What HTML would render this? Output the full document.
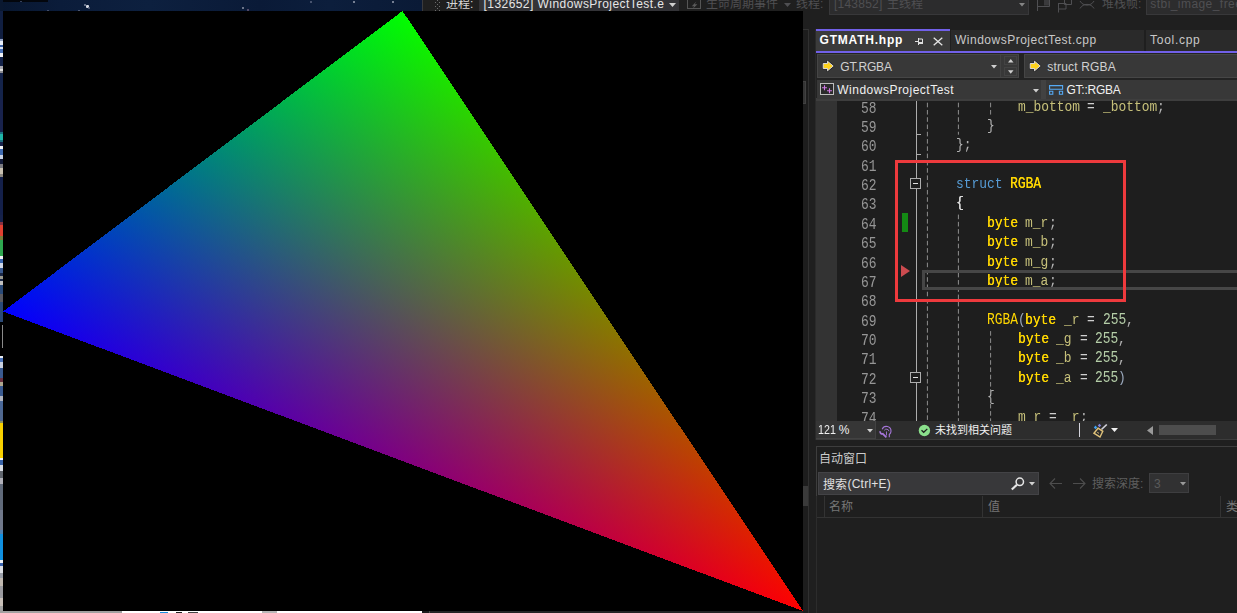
<!DOCTYPE html>
<html><head><meta charset="utf-8"><title>VS</title>
<style>
html,body{margin:0;padding:0}
body{width:1237px;height:613px;position:relative;overflow:hidden;background:#1f1f1f;font-family:"Liberation Sans",sans-serif;font-size:12px;color:#d6d6d6}
.a{position:absolute}
.t{white-space:pre}
.c{font-family:"Liberation Mono",monospace;white-space:pre;transform-origin:0 0}
.k{font-family:"Liberation Sans","Noto Sans CJK SC",sans-serif}
</style></head>
<body>
<!-- tb -->
<div class="a" style="left:422px;top:0px;width:815px;height:29px;background:#1f1f1f;"></div>
<div class="a" style="left:422px;top:0px;width:1px;height:11px;background:#3a3a3d;"></div>
<div class="a" style="left:435px;top:-2px;width:1px;height:1px;background:#6c6c6c;"></div>
<div class="a" style="left:439px;top:-2px;width:1px;height:1px;background:#6c6c6c;"></div>
<div class="a" style="left:437px;top:0px;width:1px;height:1px;background:#6c6c6c;"></div>
<div class="a" style="left:435px;top:2px;width:1px;height:1px;background:#6c6c6c;"></div>
<div class="a" style="left:439px;top:2px;width:1px;height:1px;background:#6c6c6c;"></div>
<div class="a" style="left:437px;top:4px;width:1px;height:1px;background:#6c6c6c;"></div>
<div class="a" style="left:435px;top:6px;width:1px;height:1px;background:#6c6c6c;"></div>
<div class="a" style="left:439px;top:6px;width:1px;height:1px;background:#6c6c6c;"></div>
<div class="a" style="left:437px;top:8px;width:1px;height:1px;background:#6c6c6c;"></div>
<div class="a" style="left:435px;top:10px;width:1px;height:1px;background:#6c6c6c;"></div>
<div class="a" style="left:439px;top:10px;width:1px;height:1px;background:#6c6c6c;"></div>
<svg class="a" style="left:446px;top:-4.00px;overflow:visible" width="28" height="16"><text class="k" x="0" y="11.6" font-size="12" fill="#d6d6d6">进程:</text></svg>
<div class="a" style="left:479px;top:-4px;width:200px;height:15px;background:#333337;"></div>
<div class="a t" style="left:483.5px;top:-2.16px;font-size:12px;line-height:12px;color:#e6e6e6;letter-spacing:0.445px;">[132652] WindowsProjectTest.e</div>
<svg class="a" style="left:669px;top:3px" width="7" height="4"><path d="M0 0h7L3.5 4z" fill="#d0d0d0"/></svg>
<svg class="a" style="left:687px;top:-4px" width="14" height="13"><rect x=".5" y=".5" width="13" height="12" fill="none" stroke="#555"/><path d="M9.300 5.500L4.800 10.300h2.400L5.600 13l4.800-4.700H7.800z" fill="#5a5a5a"/></svg>
<svg class="a" style="left:706px;top:-4.00px;overflow:visible" width="73" height="16"><text class="k" x="0" y="11.6" font-size="12" fill="#4f4f52">生命周期事件</text></svg>
<svg class="a" style="left:784px;top:3px" width="7" height="4"><path d="M0 0h7L3.5 4z" fill="#4f4f52"/></svg>
<svg class="a" style="left:796px;top:-4.00px;overflow:visible" width="28" height="16"><text class="k" x="0" y="11.6" font-size="12" fill="#4f4f52">线程:</text></svg>
<div class="a" style="left:829px;top:-4px;width:200px;height:19px;background:#2c2c2d;border:1px solid #38383a;box-sizing:border-box"></div>
<div class="a t" style="left:834px;top:-2.16px;font-size:12px;line-height:12px;color:#4f4f52;letter-spacing:0.224px;">[143852]</div>
<svg class="a" style="left:887px;top:-4.00px;overflow:visible" width="37" height="16"><text class="k" x="0" y="11.6" font-size="12" fill="#4f4f52">主线程</text></svg>
<svg class="a" style="left:1019px;top:3px" width="6" height="4"><path d="M0 0h6L3 3.500z" fill="#858585"/></svg>
<svg class="a" style="left:1030px;top:0" width="70" height="14" fill="none" stroke="#4f4f52"><rect x="14" y="0" width="5" height="5.500" fill="#3a3a3c" stroke="none"/><path d="M7.500 0V11M7.500 6.500H19.500V0"/><path d="M28.500 3V12.500M28.500 3.500h7.500v5.500h-7.500M34.500 0v4.500h7V0"/><path d="M50 1c3 5.500 11 5.500 14 0M50 8.500c3-5.500 11-5.500 14 0"/></svg>
<svg class="a" style="left:1102px;top:-4.00px;overflow:visible" width="40" height="16"><text class="k" x="0" y="11.6" font-size="12" fill="#4f4f52">堆栈帧:</text></svg>
<div class="a" style="left:1146px;top:-4px;width:100px;height:19px;background:#2c2c2d;border:1px solid #38383a;box-sizing:border-box"></div>
<div class="a t" style="left:1150.3px;top:-2.16px;font-size:12px;line-height:12px;color:#4f4f52;letter-spacing:0.441px;">stbi_image_free</div>
<!-- top -->
<div class="a" style="left:803px;top:11px;width:13px;height:602px;background:#1f1f1f;"></div>
<div class="a" style="left:803px;top:29px;width:5px;height:584px;background:#1d1d1d;"></div>
<div class="a" style="left:803px;top:29px;width:6px;height:1px;background:#333333;"></div>
<div class="a" style="left:808px;top:29px;width:1px;height:584px;background:#303030;"></div>
<div class="a" style="left:803px;top:81px;width:3px;height:23px;background:#343434;border:1px solid #414141;box-sizing:border-box;border-left:none"></div>
<div class="a" style="left:803px;top:486px;width:5px;height:20px;background:#3a3a3a;"></div>
<div class="a" style="left:815px;top:29px;width:1px;height:411px;background:#2a2a2a;"></div>
<div class="a" style="left:816px;top:29px;width:134px;height:2px;background:#7160e8;"></div>
<div class="a" style="left:816px;top:31px;width:134px;height:20px;background:#3b3b3b;"></div>
<div class="a" style="left:816px;top:51px;width:421px;height:2px;background:#7160e8;"></div>
<div class="a t" style="left:819.6px;top:33.84px;font-size:12px;line-height:12px;color:#ffffff;font-weight:bold;letter-spacing:0.774px;">GTMATH.hpp</div>
<svg class="a" style="left:915px;top:38px" width="9" height="7" fill="none" stroke="#e0e0e0"><path d="M0 3.500h3.500M3.500 0v7M3.500 1h4v4.500"/><path d="M3.500 5h4.500" stroke-width="2"/></svg>
<svg class="a" style="left:933px;top:37px" width="10" height="9" fill="none" stroke="#e4e4e4" stroke-width="1.3"><path d="M.7.700l8.600 7.600M9.300.700L.7 8.300"/></svg>
<div class="a" style="left:951px;top:30px;width:193px;height:21px;background:#2a2a2a;"></div>
<div class="a t" style="left:955px;top:33.84px;font-size:12px;line-height:12px;color:#c8c8c8;letter-spacing:0.495px;">WindowsProjectTest.cpp</div>
<div class="a" style="left:1146px;top:30px;width:92px;height:21px;background:#2a2a2a;"></div>
<div class="a t" style="left:1150px;top:33.84px;font-size:12px;line-height:12px;color:#c8c8c8;letter-spacing:0.726px;">Tool.cpp</div>
<div class="a" style="left:816px;top:53px;width:421px;height:48px;background:#232323;"></div>
<div class="a" style="left:816px;top:98px;width:421px;height:3px;background:#3e3e3e;"></div>
<div class="a" style="left:817px;top:54px;width:202px;height:24px;background:#383838;border:1px solid #464646;box-sizing:border-box"></div>
<div class="a" style="left:1000px;top:55px;width:1px;height:22px;background:#424242;"></div>
<div class="a" style="left:1004px;top:56px;width:13px;height:9px;background:#383838;border:1px solid #434343;box-sizing:border-box"></div>
<div class="a" style="left:1004px;top:67px;width:13px;height:9px;background:#383838;border:1px solid #434343;box-sizing:border-box"></div>
<div class="a" style="left:1024px;top:54px;width:220px;height:24px;background:#383838;border:1px solid #464646;box-sizing:border-box"></div>
<svg class="a" style="left:821.7px;top:60px" width="13" height="12"><path d="M1.200 3.500h4.300V1.200L11.200 6l-5.700 4.800V8.500H1.200z" fill="#ffd21c" stroke="#262626" stroke-width="2.2" stroke-linejoin="round"/><path d="M1.200 3.500h4.300V1.200L11.200 6l-5.700 4.800V8.500H1.200z" fill="#ffd21c" stroke="#e2e0ea" stroke-width=".9"/></svg>
<div class="a t" style="left:840.3px;top:60.84px;font-size:12px;line-height:12px;color:#d0d0d0;letter-spacing:-0.168px;">GT.RGBA</div>
<svg class="a" style="left:991px;top:64.800px" width="6" height="4"><path d="M0 0h6L3 3.400z" fill="#cfcfcf"/></svg>
<svg class="a" style="left:1007.800px;top:58.600px" width="6" height="15"><path d="M0 3.400h5.500L2.750 0z" fill="#cfcfcf"/><path d="M0 11.300h5.500L2.750 14.700z" fill="#cfcfcf"/></svg>
<svg class="a" style="left:1028.8px;top:60px" width="13" height="12"><path d="M1.200 3.500h4.300V1.200L11.200 6l-5.700 4.800V8.500H1.200z" fill="#ffd21c" stroke="#262626" stroke-width="2.2" stroke-linejoin="round"/><path d="M1.200 3.500h4.300V1.200L11.200 6l-5.700 4.800V8.500H1.200z" fill="#ffd21c" stroke="#e2e0ea" stroke-width=".9"/></svg>
<div class="a t" style="left:1047.3px;top:60.84px;font-size:12px;line-height:12px;color:#d0d0d0;letter-spacing:0.184px;">struct RGBA</div>
<div class="a" style="left:817px;top:79.5px;width:224px;height:19px;background:#383838;"></div>
<div class="a" style="left:1041px;top:79.5px;width:5px;height:19px;background:#424242;"></div>
<div class="a" style="left:1046px;top:79.5px;width:200px;height:19px;background:#383838;"></div>
<svg class="a" style="left:820px;top:83px" width="15" height="13" fill="none"><rect x=".5" y=".5" width="13" height="11" fill="#2b2b2b" stroke="#bdbdbd"/><path d="M2 4.700h5M4.500 2.200v5M7 7.700h5M9.500 5.200v5" stroke="#d277e6" stroke-width="1.1"/></svg>
<div class="a t" style="left:837.3px;top:83.84px;font-size:12px;line-height:12px;color:#f0f0f0;letter-spacing:0.487px;">WindowsProjectTest</div>
<svg class="a" style="left:1033px;top:88.800px" width="6" height="4"><path d="M0 0h6L3 3.400z" fill="#cfcfcf"/></svg>
<svg class="a" style="left:1049px;top:85px" width="15" height="10" fill="none" stroke="#55aaf5" stroke-width="1.100"><path d="M.6.600h13v3.600H.6zM.6 6.200h3.200v3H.6zM10.400 6.200h3.200v3h-3.200z"/></svg>
<div class="a t" style="left:1066.5px;top:83.84px;font-size:12px;line-height:12px;color:#f0f0f0;letter-spacing:-0.251px;">GT::RGBA</div>
<!-- ed -->
<div class="a" style="left:816px;top:101px;width:421px;height:320px;background:#1e1e1e;"></div>
<div class="a" style="left:816px;top:101px;width:21px;height:320px;background:#333333;"></div>
<div class="a c" style="left:861.00px;top:101px;font-size:16.5px;line-height:16.5px;transform:scaleX(0.7828);color:#969696;">58</div>
<div class="a c" style="left:861.00px;top:120px;font-size:16.5px;line-height:16.5px;transform:scaleX(0.7828);color:#969696;">59</div>
<div class="a c" style="left:861.00px;top:139px;font-size:16.5px;line-height:16.5px;transform:scaleX(0.7828);color:#969696;">60</div>
<div class="a c" style="left:861.00px;top:159px;font-size:16.5px;line-height:16.5px;transform:scaleX(0.7828);color:#969696;">61</div>
<div class="a c" style="left:861.00px;top:178px;font-size:16.5px;line-height:16.5px;transform:scaleX(0.7828);color:#969696;">62</div>
<div class="a c" style="left:861.00px;top:197px;font-size:16.5px;line-height:16.5px;transform:scaleX(0.7828);color:#969696;">63</div>
<div class="a c" style="left:861.00px;top:217px;font-size:16.5px;line-height:16.5px;transform:scaleX(0.7828);color:#969696;">64</div>
<div class="a c" style="left:861.00px;top:236px;font-size:16.5px;line-height:16.5px;transform:scaleX(0.7828);color:#969696;">65</div>
<div class="a c" style="left:861.00px;top:256px;font-size:16.5px;line-height:16.5px;transform:scaleX(0.7828);color:#969696;">66</div>
<div class="a c" style="left:861.00px;top:275px;font-size:16.5px;line-height:16.5px;transform:scaleX(0.7828);color:#969696;">67</div>
<div class="a c" style="left:861.00px;top:294px;font-size:16.5px;line-height:16.5px;transform:scaleX(0.7828);color:#969696;">68</div>
<div class="a c" style="left:861.00px;top:314px;font-size:16.5px;line-height:16.5px;transform:scaleX(0.7828);color:#969696;">69</div>
<div class="a c" style="left:861.00px;top:333px;font-size:16.5px;line-height:16.5px;transform:scaleX(0.7828);color:#969696;">70</div>
<div class="a c" style="left:861.00px;top:352px;font-size:16.5px;line-height:16.5px;transform:scaleX(0.7828);color:#969696;">71</div>
<div class="a c" style="left:861.00px;top:372px;font-size:16.5px;line-height:16.5px;transform:scaleX(0.7828);color:#969696;">72</div>
<div class="a c" style="left:861.00px;top:391px;font-size:16.5px;line-height:16.5px;transform:scaleX(0.7828);color:#969696;">73</div>
<div class="a c" style="left:861.00px;top:411px;font-size:16.5px;line-height:16.5px;transform:scaleX(0.7828);color:#969696;">74</div>
<div class="a c" style="left:1017.50px;top:100px;font-size:14.5px;line-height:14.5px;transform:scaleX(0.8908);color:#c6c07a;">m_bottom</div>
<div class="a c" style="left:1087.25px;top:100px;font-size:15px;line-height:15px;transform:scaleX(0.8611);color:#cfcfcf;">=</div>
<div class="a c" style="left:1102.75px;top:100px;font-size:14.5px;line-height:14.5px;transform:scaleX(0.8908);color:#c6c07a;">_bottom</div>
<div class="a c" style="left:1157.00px;top:100px;font-size:15px;line-height:15px;transform:scaleX(0.8611);color:#b4b4b4;">;</div>
<div class="a c" style="left:986.50px;top:119px;font-size:15px;line-height:15px;transform:scaleX(0.8611);color:#b4b4b4;">}</div>
<div class="a c" style="left:955.50px;top:138px;font-size:15px;line-height:15px;transform:scaleX(0.8611);color:#b4b4b4;">};</div>
<div class="a c" style="left:955.50px;top:177px;font-size:14.5px;line-height:14.5px;transform:scaleX(0.8908);color:#569cd6;">struct</div>
<div class="a c" style="left:1009.75px;top:176px;font-size:16.5px;line-height:16.5px;transform:scaleX(0.7828);color:#ffd700;text-shadow:.3px 0 0 #ffd700;">RGBA</div>
<div class="a c" style="left:955.50px;top:196px;font-size:15px;line-height:15px;transform:scaleX(0.8611);color:#dcdcdc;text-shadow:.3px 0 0 #dcdcdc;">{</div>
<div class="a c" style="left:986.50px;top:216px;font-size:14.5px;line-height:14.5px;transform:scaleX(0.8908);color:#ffd700;text-shadow:.3px 0 0 #ffd700;">byte</div>
<div class="a c" style="left:1025.25px;top:216px;font-size:14.5px;line-height:14.5px;transform:scaleX(0.8908);color:#c6c07a;">m_r</div>
<div class="a c" style="left:1048.50px;top:216px;font-size:15px;line-height:15px;transform:scaleX(0.8611);color:#b4b4b4;">;</div>
<div class="a c" style="left:986.50px;top:235px;font-size:14.5px;line-height:14.5px;transform:scaleX(0.8908);color:#ffd700;text-shadow:.3px 0 0 #ffd700;">byte</div>
<div class="a c" style="left:1025.25px;top:235px;font-size:14.5px;line-height:14.5px;transform:scaleX(0.8908);color:#c6c07a;">m_b</div>
<div class="a c" style="left:1048.50px;top:235px;font-size:15px;line-height:15px;transform:scaleX(0.8611);color:#b4b4b4;">;</div>
<div class="a c" style="left:986.50px;top:255px;font-size:14.5px;line-height:14.5px;transform:scaleX(0.8908);color:#ffd700;text-shadow:.3px 0 0 #ffd700;">byte</div>
<div class="a c" style="left:1025.25px;top:255px;font-size:14.5px;line-height:14.5px;transform:scaleX(0.8908);color:#c6c07a;">m_g</div>
<div class="a c" style="left:1048.50px;top:255px;font-size:15px;line-height:15px;transform:scaleX(0.8611);color:#b4b4b4;">;</div>
<div class="a c" style="left:986.50px;top:274px;font-size:14.5px;line-height:14.5px;transform:scaleX(0.8908);color:#ffd700;text-shadow:.3px 0 0 #ffd700;">byte</div>
<div class="a c" style="left:1025.25px;top:274px;font-size:14.5px;line-height:14.5px;transform:scaleX(0.8908);color:#c6c07a;">m_a</div>
<div class="a c" style="left:1048.50px;top:274px;font-size:15px;line-height:15px;transform:scaleX(0.8611);color:#b4b4b4;">;</div>
<div class="a c" style="left:986.50px;top:312px;font-size:16.5px;line-height:16.5px;transform:scaleX(0.7828);color:#ffd700;">RGBA</div>
<div class="a c" style="left:1017.50px;top:313px;font-size:15px;line-height:15px;transform:scaleX(0.8611);color:#9aa8bc;">(</div>
<div class="a c" style="left:1025.25px;top:313px;font-size:14.5px;line-height:14.5px;transform:scaleX(0.8908);color:#ffd700;text-shadow:.3px 0 0 #ffd700;">byte</div>
<div class="a c" style="left:1064.00px;top:313px;font-size:14.5px;line-height:14.5px;transform:scaleX(0.8908);color:#c6c07a;">_r</div>
<div class="a c" style="left:1087.25px;top:313px;font-size:15px;line-height:15px;transform:scaleX(0.8611);color:#cfcfcf;">=</div>
<div class="a c" style="left:1102.75px;top:312px;font-size:16.5px;line-height:16.5px;transform:scaleX(0.7828);color:#b5cea8;">255</div>
<div class="a c" style="left:1126.00px;top:313px;font-size:15px;line-height:15px;transform:scaleX(0.8611);color:#b4b4b4;">,</div>
<div class="a c" style="left:1017.50px;top:332px;font-size:14.5px;line-height:14.5px;transform:scaleX(0.8908);color:#ffd700;text-shadow:.3px 0 0 #ffd700;">byte</div>
<div class="a c" style="left:1056.25px;top:332px;font-size:14.5px;line-height:14.5px;transform:scaleX(0.8908);color:#c6c07a;">_g</div>
<div class="a c" style="left:1079.50px;top:332px;font-size:15px;line-height:15px;transform:scaleX(0.8611);color:#cfcfcf;">=</div>
<div class="a c" style="left:1095.00px;top:331px;font-size:16.5px;line-height:16.5px;transform:scaleX(0.7828);color:#b5cea8;">255</div>
<div class="a c" style="left:1118.25px;top:332px;font-size:15px;line-height:15px;transform:scaleX(0.8611);color:#b4b4b4;">,</div>
<div class="a c" style="left:1017.50px;top:351px;font-size:14.5px;line-height:14.5px;transform:scaleX(0.8908);color:#ffd700;text-shadow:.3px 0 0 #ffd700;">byte</div>
<div class="a c" style="left:1056.25px;top:351px;font-size:14.5px;line-height:14.5px;transform:scaleX(0.8908);color:#c6c07a;">_b</div>
<div class="a c" style="left:1079.50px;top:351px;font-size:15px;line-height:15px;transform:scaleX(0.8611);color:#cfcfcf;">=</div>
<div class="a c" style="left:1095.00px;top:350px;font-size:16.5px;line-height:16.5px;transform:scaleX(0.7828);color:#b5cea8;">255</div>
<div class="a c" style="left:1118.25px;top:351px;font-size:15px;line-height:15px;transform:scaleX(0.8611);color:#b4b4b4;">,</div>
<div class="a c" style="left:1017.50px;top:371px;font-size:14.5px;line-height:14.5px;transform:scaleX(0.8908);color:#ffd700;text-shadow:.3px 0 0 #ffd700;">byte</div>
<div class="a c" style="left:1056.25px;top:371px;font-size:14.5px;line-height:14.5px;transform:scaleX(0.8908);color:#c6c07a;">_a</div>
<div class="a c" style="left:1079.50px;top:371px;font-size:15px;line-height:15px;transform:scaleX(0.8611);color:#cfcfcf;">=</div>
<div class="a c" style="left:1095.00px;top:370px;font-size:16.5px;line-height:16.5px;transform:scaleX(0.7828);color:#b5cea8;">255</div>
<div class="a c" style="left:1118.25px;top:371px;font-size:15px;line-height:15px;transform:scaleX(0.8611);color:#9aa8bc;">)</div>
<div class="a c" style="left:986.50px;top:390px;font-size:15px;line-height:15px;transform:scaleX(0.8611);color:#b4b4b4;">{</div>
<div class="a c" style="left:1017.50px;top:410px;font-size:14.5px;line-height:14.5px;transform:scaleX(0.8908);color:#c6c07a;">m_r</div>
<div class="a c" style="left:1048.50px;top:410px;font-size:15px;line-height:15px;transform:scaleX(0.8611);color:#cfcfcf;">=</div>
<div class="a c" style="left:1064.00px;top:410px;font-size:14.5px;line-height:14.5px;transform:scaleX(0.8908);color:#c6c07a;">_r</div>
<div class="a c" style="left:1079.50px;top:410px;font-size:15px;line-height:15px;transform:scaleX(0.8611);color:#b4b4b4;">;</div>
<div class="a" style="left:915.5px;top:101px;width:1.5px;height:320px;background:#adadad;"></div>
<div class="a" style="left:916px;top:134px;width:5px;height:1px;background:#adadad;"></div>
<div class="a" style="left:916px;top:154px;width:5px;height:1px;background:#adadad;"></div>
<svg class="a" style="left:910px;top:178px" width="11" height="11"><rect x=".5" y=".5" width="10" height="10" fill="#1e1e1e" stroke="#adadad"/><path d="M3 5.500h5" stroke="#e0e0e0"/></svg>
<svg class="a" style="left:910px;top:372px" width="11" height="11"><rect x=".5" y=".5" width="10" height="10" fill="#1e1e1e" stroke="#adadad"/><path d="M3 5.500h5" stroke="#e0e0e0"/></svg>
<svg class="a" style="left:0;top:0" width="1237" height="421" fill="none" stroke="#8e8e8e" stroke-width="1" stroke-dasharray="4.6 2.67">
<line x1="927.4" y1="102.7" x2="927.4" y2="421"/>
<line x1="958.4" y1="102.7" x2="958.4" y2="134.7"/>
<line x1="990.6" y1="102.7" x2="990.6" y2="115.5"/>
<line x1="958.4" y1="214.6" x2="958.4" y2="421"/>
<line x1="990.6" y1="331.1" x2="990.6" y2="421"/>
</svg>
<div class="a" style="left:922.4px;top:270.2px;width:320px;height:2.4px;background:#464646;"></div>
<div class="a" style="left:922.4px;top:287.3px;width:320px;height:2.4px;background:#464646;"></div>
<div class="a" style="left:922.4px;top:270.2px;width:2.4px;height:19.5px;background:#464646;"></div>
<div class="a" style="left:902px;top:213px;width:6px;height:19px;background:#148a14;"></div>
<svg class="a" style="left:901px;top:265px" width="9" height="12"><path d="M0 0l9 6-9 6z" fill="#cc4b4f"/></svg>
<div class="a" style="left:895px;top:160px;width:231px;height:142px;background:transparent;border:3px solid #ee3a3d;box-sizing:border-box"></div>
<!-- st -->
<div class="a" style="left:816px;top:421px;width:421px;height:18px;background:#2d2d2d;"></div>
<div class="a" style="left:816px;top:439px;width:421px;height:1px;background:#3c3c3c;"></div>
<div class="a" style="left:816px;top:421px;width:59.5px;height:17.5px;background:#363636;border-right:1px solid #424242;border-bottom:1px solid #424242;box-sizing:border-box"></div>
<div class="a t" style="left:818.3px;top:423.84px;font-size:12px;line-height:12px;color:#f0f0f0;transform:scaleX(.89);transform-origin:0 0;">121</div>
<div class="a t" style="left:838.7px;top:423.84px;font-size:12px;line-height:12px;color:#f0f0f0;">%</div>
<svg class="a" style="left:867px;top:429px" width="6" height="4"><path d="M0 0h6L3 3.500z" fill="#d0d0d0"/></svg>
<svg class="a" style="left:878.500px;top:424.500px" width="13" height="13" fill="none" stroke="#a676da"><path d="M3.200 4.200A4.600 4.600 0 0 1 12 6.200c0 1.600-.9 2.600-1.700 3.300v2.800" stroke-width="1.100"/><path d="M5.300 5.300a2.600 2.600 0 0 1 4.700.900M7.500 6.500v4" stroke-width=".9"/><path d="M1.300 6.300a2 2 0 0 0 2.500 2.500l3.600 3.600" stroke-width="1.700"/></svg>
<svg class="a" style="left:918px;top:424px" width="13" height="13"><circle cx="6.400" cy="6.500" r="5.700" fill="#8be08c"/><path d="M3.500 6.300l2.200 2 3.600-3.400" fill="none" stroke="#1e1e1e" stroke-width="1.300"/></svg>
<svg class="a" style="left:935px;top:422.95px;overflow:visible" width="78" height="14"><text class="k" x="0" y="10.7" font-size="11" fill="#f0f0f0">未找到相关问题</text></svg>
<div class="a" style="left:1078.8px;top:423px;width:1.5px;height:14px;background:#d4d4dc;"></div>
<svg class="a" style="left:1093px;top:423px" width="15" height="15" fill="none"><path d="M13.800 1.500L8.500 6.500" stroke="#d2d2da" stroke-width="1.700"/><path d="M5 5.200l4.800 3.100L7 14 1 10.200z" stroke="#e0c27a" stroke-width="1.400"/><path d="M4.300 9.300l1.600 1" stroke="#e0c27a"/><path d="M2.500 2.600l1.700 1.800-1.700 1.800L.8 4.400z" fill="#3fa2f2"/><path d="M6.500.7l1.700 1.800-1.700 1.800-1.700-1.800z" fill="#8583e0"/></svg>
<svg class="a" style="left:1111px;top:428px" width="7" height="4"><path d="M0 0h7L3.500 4z" fill="#f0f0f0"/></svg>
<svg class="a" style="left:1147px;top:426px" width="6" height="9"><path d="M6 0v9L0 4.500z" fill="#999"/></svg>
<div class="a" style="left:1159px;top:425px;width:57px;height:10px;background:#4d4d4d;"></div>
<!-- auto -->
<div class="a" style="left:816px;top:446px;width:421px;height:167px;background:#1f1f1f;border-top:1px solid #3d3d3d;border-left:1px solid #2c2c2c;box-sizing:border-box"></div>
<div class="a" style="left:816px;top:446px;width:1px;height:50px;background:#3d3d3d;"></div>
<svg class="a" style="left:819.3px;top:451.00px;overflow:visible" width="49" height="16"><text class="k" x="0" y="11.6" font-size="12" fill="#cccccc">自动窗口</text></svg>
<div class="a" style="left:818px;top:472px;width:221px;height:23px;background:#38383a;border:1px solid #434346;box-sizing:border-box"></div>
<svg class="a" style="left:823px;top:476.50px;overflow:visible" width="25" height="16"><text class="k" x="0" y="11.6" font-size="12" fill="#e0e0e0">搜索</text></svg>
<div class="a t" style="left:847.5px;top:478.34px;font-size:12px;line-height:12px;color:#e0e0e0;letter-spacing:0.229px;">(Ctrl+E)</div>
<svg class="a" style="left:1010px;top:476px" width="16" height="15" fill="none" stroke="#e6e6e6"><circle cx="9.800" cy="5.800" r="3.700" stroke-width="1.500"/><path d="M6.900 8.700L1.800 13.500" stroke-width="2.200"/></svg>
<svg class="a" style="left:1029px;top:482px" width="6" height="4"><path d="M0 0h6L3 3.500z" fill="#d0d0d0"/></svg>
<svg class="a" style="left:1049px;top:477px" width="40" height="13" fill="none" stroke="#4d4d4d" stroke-width="1.1"><path d="M13 6.500H1M6 1.500l-5 5 5 5"/><path d="M24 6.500h12M31 1.500l5 5-5 5"/></svg>
<svg class="a" style="left:1092px;top:476.00px;overflow:visible" width="52" height="16"><text class="k" x="0" y="11.6" font-size="12" fill="#5e5e5e">搜索深度:</text></svg>
<div class="a" style="left:1149px;top:473px;width:40px;height:20px;background:#313132;border:1px solid #3e3e40;box-sizing:border-box"></div>
<div class="a t" style="left:1154px;top:477.84px;font-size:12px;line-height:12px;color:#5a5a5a;">3</div>
<svg class="a" style="left:1179.500px;top:482px" width="6" height="4"><path d="M0 0h6L3 3.500z" fill="#9a9a9a"/></svg>
<div class="a" style="left:817px;top:517px;width:420px;height:1px;background:#333333;"></div>
<div class="a" style="left:824px;top:496px;width:1px;height:21px;background:#333333;"></div>
<div class="a" style="left:982px;top:496px;width:1px;height:21px;background:#333333;"></div>
<div class="a" style="left:1220px;top:496px;width:1px;height:21px;background:#333333;"></div>
<svg class="a" style="left:829.3px;top:499.00px;overflow:visible" width="25" height="16"><text class="k" x="0" y="11.6" font-size="12" fill="#767676">名称</text></svg>
<svg class="a" style="left:988px;top:499.00px;overflow:visible" width="13" height="16"><text class="k" x="0" y="11.6" font-size="12" fill="#767676">值</text></svg>
<svg class="a" style="left:1226px;top:499.00px;overflow:visible" width="13" height="16"><text class="k" x="0" y="11.6" font-size="12" fill="#767676">类</text></svg>
<!-- desk -->
<div class="a" style="left:0;top:0;width:422px;height:11px;background:linear-gradient(to right,#081730 0,#0b1c3a 60px,#0d203f 150px,#0a1a37 260px,#0c1e3c 330px,#0a1a36 422px)"></div>
<div class="a" style="left:0;top:0;width:48px;height:2px;background:#03060c"></div>
<div class="a" style="left:84px;top:4px;width:2px;height:2px;background:#7f89a0;border-radius:1px"></div>
<div class="a" style="left:85.5px;top:5px;width:3px;height:2.5px;background:#d6d9e2;border-radius:1px"></div>
<div class="a" style="left:88px;top:7px;width:2px;height:2px;background:#5f6a84;border-radius:1px"></div>
<div class="a" style="left:77.5px;top:10px;width:2px;height:1px;background:#56607a;border-radius:1px"></div>
<div class="a" style="left:46.5px;top:10px;width:2px;height:1px;background:#4c5670;border-radius:1px"></div>
<div class="a" style="left:19.5px;top:0.5px;width:2px;height:1.5px;background:#3e4a66;border-radius:1px"></div>
<div class="a" style="left:242px;top:7px;width:2px;height:1.5px;background:#8e94a6;border-radius:1px"></div>
<div class="a" style="left:246.5px;top:9px;width:2px;height:1.5px;background:#6a5a78;border-radius:1px"></div>
<div class="a" style="left:310px;top:1px;width:1.5px;height:1.5px;background:#5c6680;border-radius:1px"></div>
<div class="a" style="left:352.5px;top:1px;width:2px;height:1.5px;background:#9aa0b2;border-radius:1px"></div>
<div class="a" style="left:391.5px;top:0.5px;width:2px;height:2px;background:#9aa0b2;border-radius:1px"></div>
<div class="a" style="left:0;top:0;width:3px;height:613px;background:linear-gradient(to bottom,#0a1830 0px,#0a1830 11px,#101e40 11px,#101e40 38px,#14234a 38px,#14234a 39px,#8fa0c0 39px,#8fa0c0 41px,#e8eef8 41px,#e8eef8 45px,#3a62a8 45px,#3a62a8 47px,#d8e2f2 47px,#d8e2f2 49px,#4a72b8 49px,#4a72b8 53px,#f0f2f6 53px,#f0f2f6 57px,#14234a 57px,#14234a 66px,#a8a8b0 66px,#a8a8b0 69px,#dcdcdc 69px,#dcdcdc 71px,#8a8a90 71px,#8a8a90 73px,#14234a 73px,#14234a 100px,#18224c 100px,#18224c 132px,#1c6f80 132px,#1c6f80 134px,#1fb5a8 134px,#1fb5a8 140px,#1c6f80 140px,#1c6f80 142px,#18224c 142px,#18224c 146px,#f0f2f6 146px,#f0f2f6 149px,#3f6ab0 149px,#3f6ab0 155px,#c8d2e6 155px,#c8d2e6 159px,#121a38 159px,#121a38 164px,#7a7a80 164px,#7a7a80 168px,#c8c0b0 168px,#c8c0b0 174px,#8a8680 174px,#8a8680 177px,#14204a 177px,#14204a 215px,#16224a 215px,#16224a 222px,#8a3040 222px,#8a3040 225px,#e04030 225px,#e04030 236px,#7a7a3a 236px,#7a7a3a 240px,#2ea850 240px,#2ea850 256px,#f0f2f6 256px,#f0f2f6 259px,#3a66b0 259px,#3a66b0 263px,#d0d8e8 263px,#d0d8e8 268px,#3a5a90 268px,#3a5a90 273px,#1a2848 273px,#1a2848 276px,#9a9a90 276px,#9a9a90 279px,#1a2848 279px,#1a2848 281px,#c0c0c0 281px,#c0c0c0 285px,#2a4a78 285px,#2a4a78 294px,#5a5a60 294px,#5a5a60 302px,#2a4a78 302px,#2a4a78 322px,#000000 322px,#000000 356px,#e8ecf4 356px,#e8ecf4 358px,#4a72b8 358px,#4a72b8 362px,#c8d0e0 362px,#c8d0e0 368px,#3a5a90 368px,#3a5a90 378px,#6a3040 378px,#6a3040 382px,#b0a890 382px,#b0a890 386px,#3a5a90 386px,#3a5a90 396px,#b0b4c0 396px,#b0b4c0 401px,#4a6898 401px,#4a6898 410px,#50688f 410px,#50688f 421px,#8a9060 421px,#8a9060 423px,#f8d000 423px,#f8d000 458px,#f0f2f6 458px,#f0f2f6 460px,#3a64a8 460px,#3a64a8 465px,#d8dce4 465px,#d8dce4 471px,#60656e 471px,#60656e 478px,#b0b0b8 478px,#b0b0b8 484px,#606a7a 484px,#606a7a 510px,#70788a 510px,#70788a 530px,#5080b0 530px,#5080b0 534px,#1090e0 534px,#1090e0 560px,#f0f2f6 560px,#f0f2f6 563px,#3a64b0 563px,#3a64b0 566px,#dcdee4 566px,#dcdee4 573px,#9a9ea8 573px,#9a9ea8 578px,#c0b8b0 578px,#c0b8b0 586px,#9a9a9f 586px,#9a9a9f 598px,#c8c0b8 598px,#c8c0b8 606px,#a0a0a0 606px,#a0a0a0 613px)"></div>
<div class="a" style="left:1.8px;top:325px;width:1px;height:23px;background:#8a8a8a;"></div>
<div class="a" style="left:3px;top:11px;width:800px;height:600px;background:#000;"></div>
<div class="a" style="left:3px;top:611px;width:119px;height:2px;background:#a0a0a0;"></div>
<div class="a" style="left:122px;top:611px;width:140px;height:2px;background:#ffffff;"></div>
<div class="a" style="left:262px;top:611px;width:15px;height:2px;background:#b8b8b8;"></div>
<div class="a" style="left:277px;top:611px;width:145px;height:2px;background:#ffffff;"></div>
<div class="a" style="left:422px;top:611px;width:381px;height:2px;background:#242424;"></div>
<div class="a" style="left:422px;top:611px;width:7px;height:2px;background:#1c1c1c;"></div>
<div class="a" style="left:429px;top:611px;width:1px;height:2px;background:#4a4a4a;"></div>
<div class="a" style="left:160px;top:612px;width:8px;height:1px;background:#1a8fe0;"></div>
<div class="a" style="left:176px;top:612px;width:6px;height:1px;background:#222;"></div>
<div class="a" style="left:188px;top:612px;width:10px;height:1px;background:#444;"></div>
<svg class="a" style="left:3px;top:11px;background:#000;isolation:isolate" width="800" height="600" viewBox="0 0 800 600" shape-rendering="crispEdges">
<defs>
<linearGradient id="gg" gradientUnits="userSpaceOnUse" x1="399.5" y1="0.0" x2="251.72" y2="394.74"><stop offset="0" stop-color="#00ff00"/><stop offset="1" stop-color="#000"/></linearGradient>
<linearGradient id="gb" gradientUnits="userSpaceOnUse" x1="0.0" y1="300.5" x2="415.12" y2="23.41"><stop offset="0" stop-color="#0000ff"/><stop offset="1" stop-color="#000"/></linearGradient>
<linearGradient id="gr" gradientUnits="userSpaceOnUse" x1="800.0" y1="600.0" x2="367.05" y2="24.41"><stop offset="0" stop-color="#ff0000"/><stop offset="1" stop-color="#000"/></linearGradient>
</defs>
<polygon points="399.5,0.0 0.0,300.5 800.0,600.0" fill="url(#gg)"/>
<polygon points="399.5,0.0 0.0,300.5 800.0,600.0" fill="url(#gb)" style="mix-blend-mode:screen"/>
<polygon points="399.5,0.0 0.0,300.5 800.0,600.0" fill="url(#gr)" style="mix-blend-mode:screen"/>
</svg>
</body></html>
